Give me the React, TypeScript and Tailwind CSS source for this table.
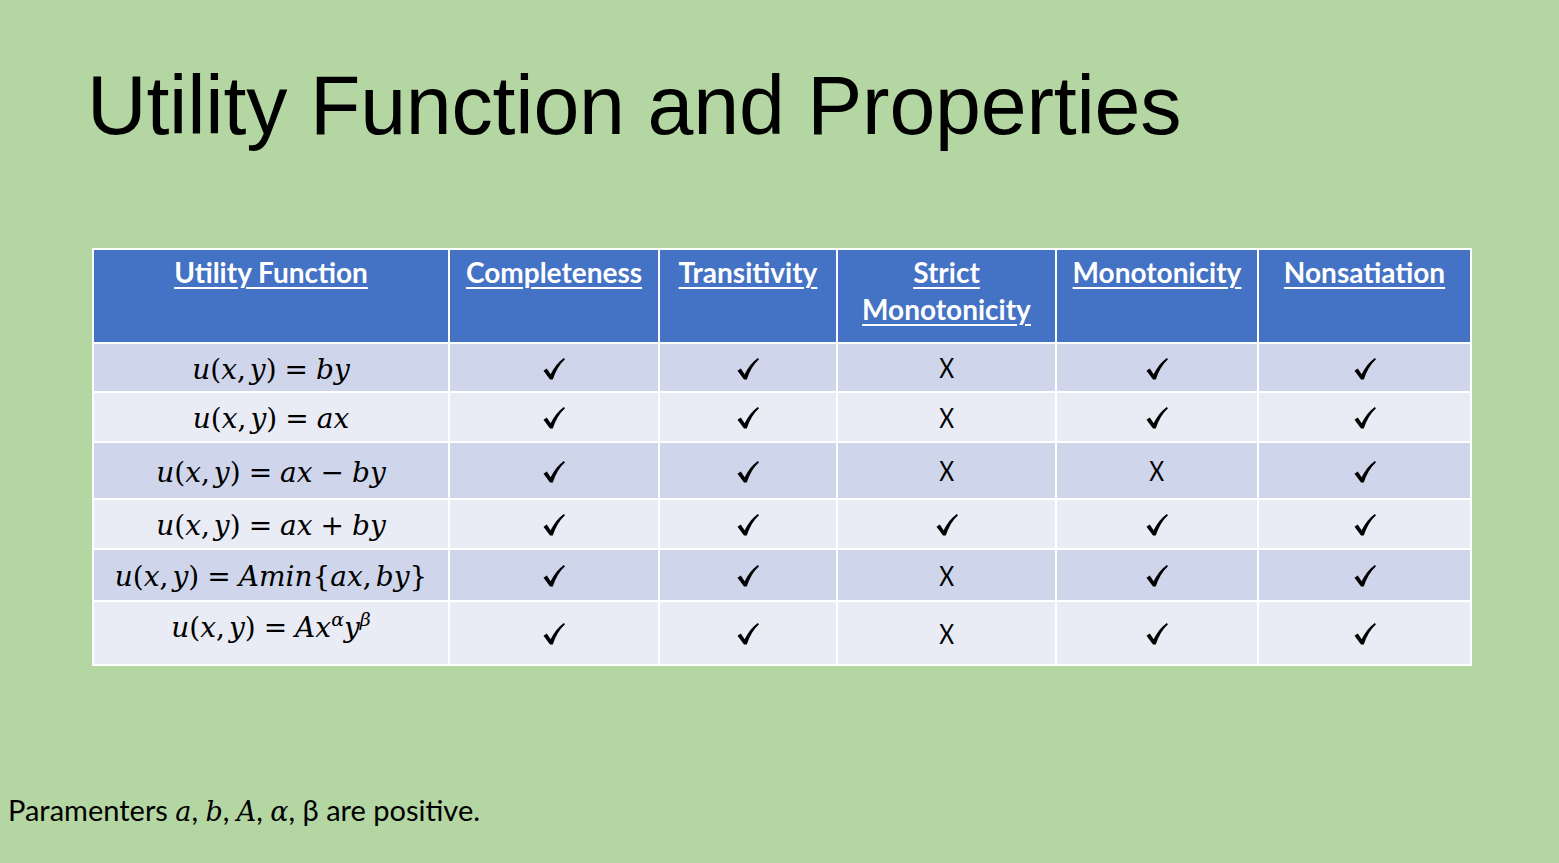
const headers = [
  ["Utility Function"],
  ["Completeness"],
  ["Transitivity"],
  ["Strict", "Monotonicity"],
  ["Monotonicity"],
  ["Nonsatiation"],
];

const widths = ["w-[356px]", "w-[210px]", "w-[178px]", "w-[219px]", "w-[202px]", "w-[213px]"];

// Math-ish text: letters italic, punctuation upright, operators spaced out
const M = ({ s }: { s: string }) => (
  <>
    {s.split("").map((c, i) => {
      if (c === "=" || c === "+" || c === "−")
        return (
          <span key={i} className="not-italic mx-[8px]">
            {c}
          </span>
        );
      if (c === ",")
        return (
          <span key={i} className="not-italic mr-[4px]">
            ,
          </span>
        );
      if (/[a-zA-Z]/.test(c)) return <i key={i}>{c}</i>;
      if (c === " ") return null;
      return (
        <span key={i} className="not-italic">
          {c}
        </span>
      );
    })}
  </>
);

type Row = { fn: React.ReactNode; marks: boolean[]; h: string; bg: string };

const rows: Row[] = [
  { fn: <M s="u(x,y)=by" />, marks: [true, true, false, true, true], h: "h-[49px]", bg: "bg-[#cfd5ea]" },
  { fn: <M s="u(x,y)=ax" />, marks: [true, true, false, true, true], h: "h-[50px]", bg: "bg-[#e9ebf5]" },
  { fn: <M s="u(x,y)=ax−by" />, marks: [true, true, false, false, true], h: "h-[57px]", bg: "bg-[#cfd5ea]" },
  { fn: <M s="u(x,y)=ax+by" />, marks: [true, true, true, true, true], h: "h-[50px]", bg: "bg-[#e9ebf5]" },
  { fn: <M s="u(x,y)=Amin{ax,by}" />, marks: [true, true, false, true, true], h: "h-[52px]", bg: "bg-[#cfd5ea]" },
  {
    fn: (
      <span className="relative -top-[7px]">
        <M s="u(x,y)=Ax" />
        <i className="text-[19px] relative -top-[11px]">α</i>
        <i>y</i>
        <i className="text-[19px] relative -top-[11px]">β</i>
      </span>
    ),
    marks: [true, true, false, true, true],
    h: "h-[64px]",
    bg: "bg-[#e9ebf5]",
  },
];

const Check = () => (
  <svg viewBox="0 0 22 22" className="inline-block w-[22px] h-[22px] align-middle">
    <path
      d="M0.5 12.8 L3.8 10.6 L7.6 16.2 C11 9.6 15.4 4 20.8 0 L22 1.2 C16.6 6.2 12.6 13 9.8 21.6 L7 21.6 Z"
      fill="#000"
    />
  </svg>
);

const Mark = ({ ok }: { ok: boolean }) =>
  ok ? (
    <Check />
  ) : (
    <span className="inline-block text-[27px] font-['Lato',sans-serif] leading-none scale-x-[0.85] align-middle">
      X
    </span>
  );

export default function App() {
  return (
    <div className="w-[1559px] h-[863px] bg-[#b4d6a2] text-black flex flex-col overflow-hidden">
      <h1 className="pl-[87px] pt-[63px] text-[82.5px] leading-[84px] font-['Liberation_Sans',Arial,sans-serif] tracking-[-0.2px]">
        Utility Function and Properties
      </h1>

      <table className="ml-[92px] mt-[101px] w-[1378px] border-collapse table-fixed">
        <thead>
          <tr className="h-[94px] bg-[#4472c4]">
            {headers.map((lines, i) => (
              <th
                key={i}
                className={`${widths[i]} border-2 border-white align-top pt-[4px] text-white font-bold text-[28px] leading-[37px] font-['Lato',sans-serif] underline underline-offset-[4px] decoration-[2px]`}
              >
                {lines.map((l, j) => (
                  <div key={j}>{l}</div>
                ))}
              </th>
            ))}
          </tr>
        </thead>
        <tbody>
          {rows.map((r, i) => (
            <tr key={i} className={`${r.h} ${r.bg}`}>
              <td className="border-2 border-white text-center text-[28px] font-['DejaVu_Serif',serif] whitespace-nowrap">
                <span className="relative top-[2px]">{r.fn}</span>
              </td>
              {r.marks.map((m, j) => (
                <td key={j} className="border-2 border-white text-center">
                  <Mark ok={m} />
                </td>
              ))}
            </tr>
          ))}
        </tbody>
      </table>

      <p className="mt-[122px] pl-[8px] text-[29px] font-['Lato',sans-serif]">
        Paramenters <i className="font-['DejaVu_Serif',serif] text-[27px]">a</i>,{" "}
        <i className="font-['DejaVu_Serif',serif] text-[27px]">b</i>,{" "}
        <i className="font-['DejaVu_Serif',serif] text-[27px]">A</i>,{" "}
        <i className="font-['DejaVu_Serif',serif] text-[27px]">α</i>, β are positive.
      </p>
    </div>
  );
}
